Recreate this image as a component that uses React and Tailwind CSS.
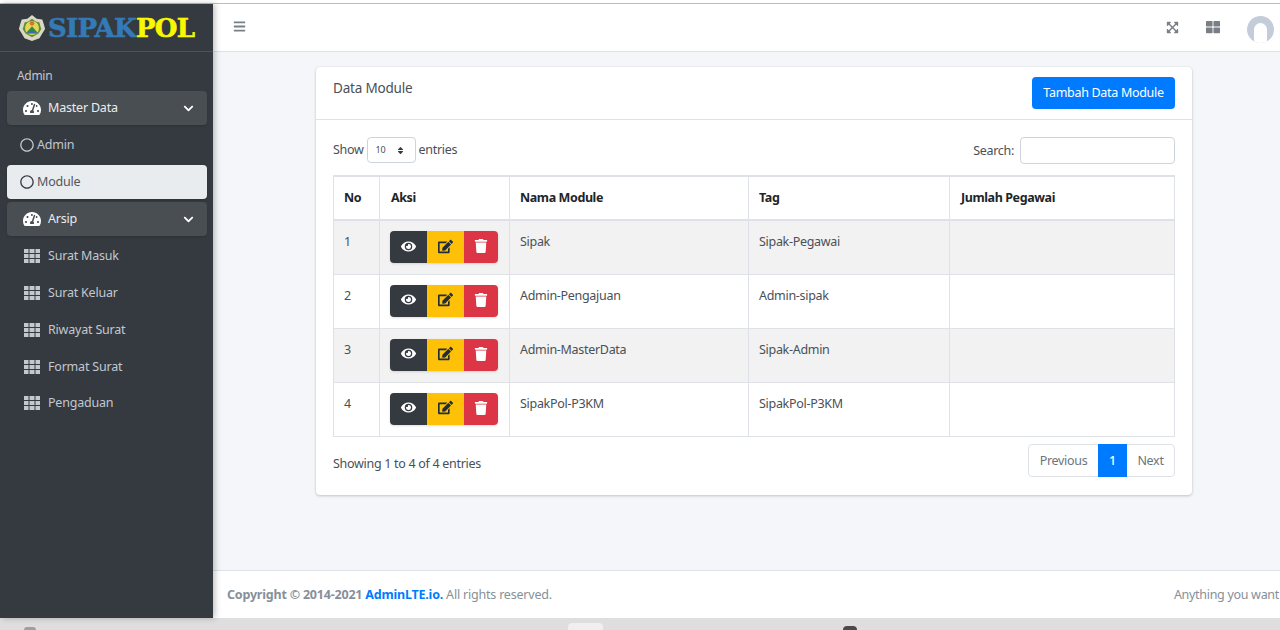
import {
    FaBars, FaChevronDown, FaEdit, FaExpandArrowsAlt, FaEye, FaRegCircle,
    FaTachometerAlt, FaThLarge, FaTrash, FaSort,
} from 'react-icons/fa';

const rows = [
    {no: 1, name: 'Sipak', tag: 'Sipak-Pegawai'},
    {no: 2, name: 'Admin-Pengajuan', tag: 'Admin-sipak'},
    {no: 3, name: 'Admin-MasterData', tag: 'Sipak-Admin'},
    {no: 4, name: 'SipakPol-P3KM', tag: 'SipakPol-P3KM'},
];

const subMenu = ['Surat Masuk', 'Surat Keluar', 'Riwayat Surat', 'Format Surat', 'Pengaduan'];

const heads = [
    {label: 'No', cls: 'px-[10px]'},
    {label: 'Aksi', cls: 'px-[11px]'},
    {label: 'Nama Module', cls: 'px-[10px]'},
    {label: 'Tag', cls: 'px-[10px]'},
    {label: 'Jumlah Pegawai', cls: 'px-[11px] tracking-[-0.1px]'},
];

function Emblem() {
    return (
        <svg width="28" height="28" viewBox="0 0 30 28" className="shrink-0">
            <path d="M15 0l5 4 6 1 2 6 1 4-3 5-3 5-8 3-8-3-3-5-3-5 1-4 2-6 6-1z" fill="#d8d8c4" />
            <path d="M15 4l4 3 4 1 1 4 1 3-3 5-7 4-7-4-3-5 1-3 1-4 4-1z" fill="#5e8f35" />
            <circle cx="15" cy="14" r="7.5" fill="#e3d65a" />
            <circle cx="15" cy="9" r="2.5" fill="#d8752e" />
            <path d="M9 19l6-7 6 7z" fill="#2f8a4a" />
            <rect x="10" y="18" width="10" height="2" fill="#3b6fb0" />
        </svg>
    );
}

function GridIcon() {
    return (
        <svg width="16" height="14" viewBox="0 0 16 14" className="shrink-0" fill="currentColor">
            <path d="M0 0h4.5v4H0zM5.5 0h5v4h-5zM11.5 0H16v4h-4.5zM0 5h4.5v4H0zM5.5 5h5v4h-5zM11.5 5H16v4h-4.5zM0 10h4.5v4H0zM5.5 10h5v4h-5zM11.5 10H16v4h-4.5z" />
        </svg>
    );
}

function GroupItem({label}) {
    return (
        <div className="h-[34px] mb-[3px] rounded bg-[#494e53] flex items-center pl-[16px] pr-[13px] text-[#e9ecef] shadow-sm">
            <FaTachometerAlt className="text-[18px] w-[18px] text-white" />
            <span className="ml-[7px] mt-[1px] text-[12.5px] tracking-[-0.2px]">{label}</span>
            <FaChevronDown className="ml-auto text-[11px] text-white" />
        </div>
    );
}

function Sidebar() {
    return (
        <aside className="w-[213px] shrink-0 bg-[#343a40] shadow-[2px_0_6px_rgba(0,0,0,0.25)] z-10">
            <div className="h-[48px] border-b border-[#4b545c] flex items-center pl-[18px]">
                <Emblem />
                <span className="ml-[2px] font-['DejaVu_Serif',serif] font-black text-[26px] leading-none tracking-[-0.7px] [-webkit-text-stroke:0.6px]">
                    <span className="text-[#337ab7]">SIPAK</span>
                    <span className="text-[#f8f800]">POL</span>
                </span>
            </div>
            <div className="pl-[7px] pr-[6px] pt-[15px]">
                <div className="pl-[10px] h-[24px] text-[12px] leading-[18px] tracking-[-0.3px] text-[#c2c7d0]">Admin</div>
                <GroupItem label="Master Data" />
                <div className="h-[34px] mb-[3px] flex items-center pl-[13px] text-[#c2c7d0] text-[12.5px] tracking-[-0.2px]">
                    <FaRegCircle className="text-[14px]" />
                    <span className="ml-[3px]">Admin</span>
                </div>
                <div className="h-[34px] mb-[3px] rounded bg-[#e9ecef] flex items-center pl-[13px] text-[#343a40] text-[12.5px] tracking-[-0.2px] shadow-sm">
                    <FaRegCircle className="text-[14px]" />
                    <span className="ml-[3px] text-[#50565b]">Module</span>
                </div>
                <GroupItem label="Arsip" />
                {subMenu.map((item, i) => (
                    <div key={item} className={`h-[34px] flex items-center pl-[17px] text-[#c2c7d0] text-[12.5px] tracking-[-0.2px] ${i === 3 ? 'mb-[2px]' : 'mb-[3px]'}`}>
                        <GridIcon />
                        <span className="ml-[8px]">{item}</span>
                    </div>
                ))}
            </div>
        </aside>
    );
}

function Navbar() {
    return (
        <header className="h-[48px] shrink-0 bg-white border-b border-[#dee2e6] flex items-center pl-[20px] text-[#7a7f85]">
            <FaBars className="text-[13px] -mt-[2px]" />
            <FaExpandArrowsAlt className="ml-auto text-[13px] -mt-[1px]" />
            <FaThLarge className="ml-[27px] text-[14px] -mt-[1px]" />
            <div className="ml-[27px] w-[27px] h-[27px] mt-[4px] mr-[6px] rounded-full bg-[#c4ccda] flex items-end justify-center overflow-hidden">
                <div className="w-[13px] h-[20px] rounded-t-full bg-white"></div>
            </div>
        </header>
    );
}

function ActionButtons() {
    return (
        <div className="flex w-[108px] h-[32px] rounded overflow-hidden shadow-sm">
            <div className="w-[37px] pb-[2px] bg-[#343a40] text-white flex items-center justify-center">
                <FaEye className="text-[15px]" />
            </div>
            <div className="w-[37px] pb-[2px] bg-[#ffc107] text-[#1f2d3d] flex items-center justify-center">
                <FaEdit className="text-[15px]" />
            </div>
            <div className="w-[34px] pb-[2px] bg-[#dc3545] text-white flex items-center justify-center">
                <FaTrash className="text-[14px]" />
            </div>
        </div>
    );
}

function DataTable() {
    return (
        <table className="w-[841px] table-fixed border-collapse text-[12.5px] tracking-[-0.3px] text-[#495057]">
            <colgroup>
                <col className="w-[46px]" />
                <col className="w-[130px]" />
                <col className="w-[239px]" />
                <col className="w-[201px]" />
                <col className="w-[225px]" />
            </colgroup>
            <thead>
                <tr className="h-[44px] text-left text-[#212529] border-t-2 border-b-2 border-[#dee2e6]">
                    {heads.map((head) => (
                        <th key={head.label} className={`border-x border-[#dee2e6] font-bold tracking-[-0.4px] ${head.cls}`}>{head.label}</th>
                    ))}
                </tr>
            </thead>
            <tbody>
                {rows.map((row) => (
                    <tr key={row.no} className={`h-[54px] ${row.no % 2 === 1 ? 'bg-[#f2f2f2]' : 'bg-white'}`}>
                        <td className="border border-[#dee2e6] px-[10px] pt-[12px] align-top">{row.no}</td>
                        <td className="border border-[#dee2e6] px-[10px] pt-[10px] align-top"><ActionButtons /></td>
                        <td className="border border-[#dee2e6] px-[10px] pt-[12px] align-top">{row.name}</td>
                        <td className="border border-[#dee2e6] px-[10px] pt-[12px] align-top">{row.tag}</td>
                        <td className="border border-[#dee2e6] px-[10px] pt-[12px] align-top"></td>
                    </tr>
                ))}
            </tbody>
        </table>
    );
}

function Card() {
    return (
        <section className="w-[876px] h-[428px] ml-[103px] mt-[15px] bg-white rounded shadow-[0_0_1px_rgba(0,0,0,0.13),0_1px_3px_rgba(0,0,0,0.2)]">
            <div className="h-[53px] border-b border-[#dee2e6] flex pl-[17px] pr-[17px]">
                <span className="mt-[11px] text-[13.5px] leading-[20px] tracking-[-0.2px] text-[#495057]">Data Module</span>
                <button className="ml-auto mt-[10px] w-[143px] h-[32px] rounded bg-[#007bff] text-white text-[12.5px] tracking-[-0.3px]">
                    Tambah Data Module
                </button>
            </div>
            <div className="px-[17px]">
                <div className="h-[55px] flex items-start text-[12.5px] tracking-[-0.3px] text-[#495057]">
                    <span className="mt-[20px] leading-[20px]">Show</span>
                    <div className="mt-[17px] ml-[3px] w-[49px] h-[26px] border border-[#ced4da] rounded flex items-center pl-[8px] pr-[10px] text-[9px]">
                        10
                        <FaSort className="ml-auto text-[9px] text-[#343a40]" />
                    </div>
                    <span className="mt-[20px] ml-[3px] leading-[20px]">entries</span>
                    <span className="mt-[21px] ml-auto leading-[20px]">Search:</span>
                    <div className="mt-[17px] ml-[6px] w-[155px] h-[27px] border border-[#ced4da] rounded"></div>
                </div>
                <DataTable />
                <div className="flex text-[12.5px] tracking-[-0.3px] text-[#495057]">
                    <span className="mt-[17px] leading-[20px]">Showing 1 to 4 of 4 entries</span>
                    <div className="ml-auto mt-[7px] h-[33px] flex border border-[#dee2e6] rounded text-[#6c757d]">
                        <span className="w-[69px] pt-[2px] flex items-center justify-center">Previous</span>
                        <span className="w-[29px] -my-px pt-[2px] bg-[#007bff] text-white font-medium flex items-center justify-center">1</span>
                        <span className="w-[47px] pt-[2px] flex items-center justify-center">Next</span>
                    </div>
                </div>
            </div>
        </section>
    );
}

export default function App() {
    return (
        <div className="h-[630px] w-[1280px] overflow-hidden flex flex-col bg-[#dedede] font-['Noto_Sans',sans-serif]">
            <div className="h-[4px] shrink-0 bg-white border-b border-[#bdbdbd]"></div>
            <div className="h-[614px] shrink-0 flex">
                <Sidebar />
                <main className="flex-1 min-w-0 flex flex-col bg-[#f4f6f9]">
                    <Navbar />
                    <div className="flex-1">
                        <Card />
                    </div>
                    <footer className="h-[48px] shrink-0 bg-white border-t border-[#dee2e6] flex items-center pl-[14px] pr-[1px] pt-[1px] text-[12.5px] tracking-[-0.2px] text-[#869099] whitespace-nowrap">
                        <b className="font-bold">Copyright © 2014-2021 <span className="text-[#007bff]">AdminLTE.io.</span></b>
                        <span className="ml-[3px]">All rights reserved.</span>
                        <span className="ml-auto tracking-[-0.3px]">Anything you want</span>
                    </footer>
                </main>
            </div>
            <div className="flex-1 flex items-end pl-[24px]">
                <div className="w-[12px] h-[3px] rounded-t-full bg-[#9aa0a6]"></div>
                <div className="ml-[532px] w-[35px] h-[7px] rounded-t bg-[#efefef]"></div>
                <div className="ml-[240px] w-[14px] h-[4px] rounded-t-full bg-[#4a4a4a]"></div>
            </div>
        </div>
    );
}
